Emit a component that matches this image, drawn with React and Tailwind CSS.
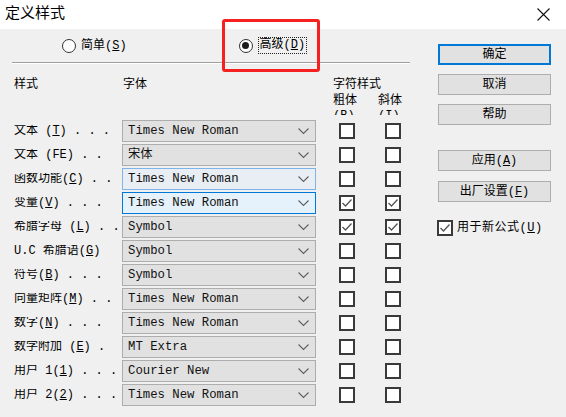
import React from 'react';

const cjk = { fontFamily: '"Liberation Mono", "Noto Sans CJK SC", monospace' };

const rows = [
  { pre: '文本 (', key: 'T', post: ') . . .', font: 'Times New Roman' },
  { pre: '文本 (FE) . .', key: '', post: '', font: '宋体' },
  { pre: '函数功能(', key: 'C', post: ') . .', font: 'Times New Roman', state: 'hover' },
  { pre: '变量(', key: 'V', post: ') . . .', font: 'Times New Roman', state: 'focus', bold: true, italic: true },
  { pre: '希腊字母 (', key: 'L', post: ') . .', font: 'Symbol', bold: true, italic: true },
  { pre: 'U.C 希腊语(', key: 'G', post: ')', font: 'Symbol' },
  { pre: '符号(', key: 'B', post: ') . . .', font: 'Symbol' },
  { pre: '向量矩阵(', key: 'M', post: ') . .', font: 'Times New Roman' },
  { pre: '数字(', key: 'N', post: ') . . .', font: 'Times New Roman' },
  { pre: '数学附加 (', key: 'E', post: ') .', font: 'MT Extra' },
  { pre: '用户 1(', key: '1', post: ') . . .', font: 'Courier New' },
  { pre: '用户 2(', key: '2', post: ') . . .', font: 'Times New Roman' },
];

const Check = ({ checked }) => (
  <div className="w-[16px] h-[16px] border-2 border-[#3a3a3a] bg-white flex items-center justify-center">
    {checked && (
      <svg width="12" height="10" viewBox="0 0 12 10">
        <polyline points="1.5,5 4.5,8 10.5,1.5" fill="none" stroke="#555" strokeWidth="1.3" />
      </svg>
    )}
  </div>
);

const Chevron = () => (
  <svg width="11" height="7" viewBox="0 0 11 7">
    <polyline points="0.5,0.5 5.5,5.5 10.5,0.5" fill="none" stroke="#606060" strokeWidth="1.1" />
  </svg>
);

const Btn = ({ children, primary }) => (
  <div
    className={`h-[21px] w-[113px] flex items-center justify-center text-[12px] text-black bg-[#e1e1e1] ${
      primary ? 'border-2 border-[#0078d7]' : 'border border-[#adadad]'
    }`}
  >
    {children}
  </div>
);

const App = () => {
  return (
    <div className="relative w-[566px] h-[417px] bg-[#f0f0f0] overflow-hidden text-black" style={cjk}>
      {/* 标题栏 */}
      <div className="h-[29px] bg-white flex items-center justify-between pl-[5px] pr-[16px]">
        <span className="text-[15px] leading-none">定义样式</span>
        <svg width="13" height="13" viewBox="0 0 13 13">
          <path d="M0.5 0.5 L12.5 12.5 M12.5 0.5 L0.5 12.5" stroke="#111" strokeWidth="1.1" />
        </svg>
      </div>

      <div className="flex">
        {/* 左侧 */}
        <div className="w-[438px]">
          <div className="h-[33px] flex items-center text-[12px]">
            <div className="ml-[62px] flex items-center">
              <div className="w-[14px] h-[14px] rounded-full border border-[#333] bg-white" />
              <span className="ml-[5px]">
                简单(<span className="underline">S</span>)
              </span>
            </div>
            <div className="ml-[112px] flex items-center">
              <div className="w-[14px] h-[14px] rounded-full border border-[#333] bg-white flex items-center justify-center">
                <div className="w-[7px] h-[7px] rounded-full bg-[#1a1a1a]" />
              </div>
              <span className="ml-[5px] px-[1px] border border-dotted border-[#222] leading-[15px]">
                高级(<span className="underline">D</span>)
              </span>
            </div>
          </div>
          <div className="ml-[12px] w-[398px] h-[2px] border-t border-[#a0a0a0] border-b border-b-white" />

          <div className="mt-[13px] flex text-[12px] leading-[16px] pl-[14px]">
            <span className="w-[109px]">样式</span>
            <span className="w-[210px]">字体</span>
            <span>字符样式</span>
          </div>
          <div className="h-[22px] overflow-hidden flex text-[12px] pl-[333px] pt-[1px]">
            <div className="w-[45px]">
              <div className="h-[15px] leading-[15px]">粗体</div>
              <div className="h-[15px] leading-[15px]">(<span className="underline">B</span>)</div>
            </div>
            <div>
              <div className="h-[15px] leading-[15px]">斜体</div>
              <div className="h-[15px] leading-[15px]">(<span className="underline">I</span>)</div>
            </div>
          </div>

          <div className="mt-[5px] flex flex-col gap-[2px]">
            {rows.map((r, i) => {
              const box =
                r.state === 'focus'
                  ? 'bg-[#e5f1fb] border-[#0078d7]'
                  : r.state === 'hover'
                  ? 'bg-[#e8eef4] border-[#7eb4ea]'
                  : 'bg-[#e1e1e1] border-[#adadad]';
              return (
                <div key={i} className="h-[22px] flex items-center">
                  <div className="w-[122px] pl-[14px] pr-[4px] text-[12px] whitespace-pre leading-none overflow-hidden">
                    {r.pre}
                    {r.key && <span className="underline">{r.key}</span>}
                    {r.post}
                  </div>
                  <div className={`w-[194px] h-[22px] border flex items-center justify-between pl-[5px] pr-[6px] ${box}`}>
                    <span className="text-[12.3px] leading-none text-[#111]">{r.font}</span>
                    <Chevron />
                  </div>
                  <div className="ml-[23px]">
                    <Check checked={r.bold} />
                  </div>
                  <div className="ml-[30px]">
                    <Check checked={r.italic} />
                  </div>
                </div>
              );
            })}
          </div>
        </div>

        {/* 右侧按钮 */}
        <div className="flex flex-col pt-[15px]">
          <Btn primary>确定</Btn>
          <div className="mt-[9px]">
            <Btn>取消</Btn>
          </div>
          <div className="mt-[9px]">
            <Btn>帮助</Btn>
          </div>
          <div className="mt-[25px]">
            <Btn>
              应用(<span className="underline">A</span>)
            </Btn>
          </div>
          <div className="mt-[10px]">
            <Btn>
              出厂设置(<span className="underline">F</span>)
            </Btn>
          </div>
          <div className="mt-[17px] flex items-center -ml-[1px] text-[12px]">
            <Check checked />
            <span className="ml-[4px] tracking-[0.5px]">
              用于新公式(<span className="underline">U</span>)
            </span>
          </div>
        </div>
      </div>

      {/* 标注框 */}
      <div className="absolute left-[222px] top-[19px] w-[98px] h-[53px] border-[3px] border-[#f52020] rounded-[3px]" />
    </div>
  );
};

export default App;
